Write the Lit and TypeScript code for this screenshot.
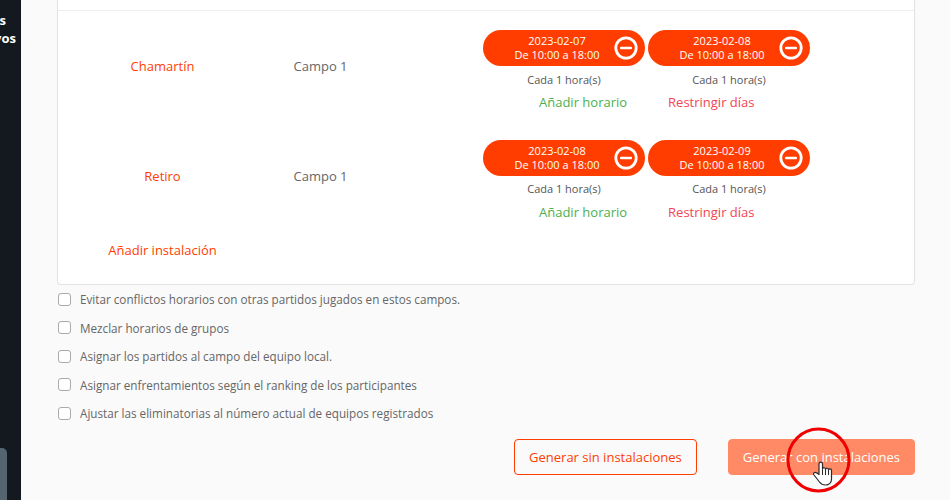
import { LitElement, html, css, svg } from 'lit';
import { customElement } from 'lit/decorators.js';

interface Slot { date: string; }
interface Venue { name: string; field: string; slots: Slot[]; }

const venues: Venue[] = [
    { name: 'Chamartín', field: 'Campo 1', slots: [{ date: '2023-02-07' }, { date: '2023-02-08' }] },
    { name: 'Retiro', field: 'Campo 1', slots: [{ date: '2023-02-08' }, { date: '2023-02-09' }] },
];

const options = [
    'Evitar conflictos horarios con otras partidos jugados en estos campos.',
    'Mezclar horarios de grupos',
    'Asignar los partidos al campo del equipo local.',
    'Asignar enfrentamientos según el ranking de los participantes',
    'Ajustar las eliminatorias al número actual de equipos registrados',
];

const minusIcon = svg`<circle cx="12" cy="12" r="10.2" fill="none" stroke="#fff" stroke-width="2.8"/><rect x="6" y="10.7" width="12" height="2.6" rx="1" fill="#fff"/>`;

@customElement('app-root')
export class AppRoot extends LitElement {
    static styles = css`
        :host {
            display: flex;
            width: 950px;
            height: 500px;
            overflow: hidden;
            position: relative;
            background: #fafafa;
            font-family: "Open Sans", sans-serif;
            color: #555;
        }
        .sidebar {
            width: 21px;
            flex: none;
            background: #13191e;
            overflow: hidden;
            display: flex;
            flex-direction: column;
            align-items: flex-end;
            padding: 11px 0 0 0;
            box-sizing: border-box;
            color: #fff;
            font-size: 13px;
            font-weight: 700;
            line-height: 18px;
            white-space: nowrap;
        }
        .sidebar .line1 { margin-right: 15px; }
        .sidebar .line2 { margin-right: 5px; }
        .sidebar-tab {
            margin-top: auto;
            align-self: flex-start;
            width: 7px;
            height: 52px;
            background: #546570;
            border-radius: 0 5px 0 0;
        }
        .main {
            flex: 1;
            padding: 0 35px 0 36px;
        }
        .panel {
            height: 285px;
            box-sizing: border-box;
            background: #fff;
            border: 1px solid #e2e2e2;
            border-top: none;
            border-radius: 0 0 4px 4px;
        }
        .top-line {
            height: 10px;
            border-bottom: 1px solid #eee;
        }
        .venue {
            display: grid;
            grid-template-columns: 209px 107px 1fr;
            height: 109.7px;
            align-items: center;
            font-size: 13px;
            text-align: center;
        }
        .venue-name { color: #ff3d00; }
        .venue-field { color: #666; }
        .schedule {
            align-self: start;
            padding: 19px 0 0 109px;
        }
        .slots { display: flex; gap: 3px; }
        .slot { width: 162px; }
        .pill {
            height: 36px;
            border-radius: 18px;
            background: #ff3d00;
            color: #fff;
            font-size: 11px;
            line-height: 14px;
            display: flex;
            align-items: center;
            padding-left: 22px;
            box-sizing: border-box;
        }
        .pill-text { width: 104px; text-align: center; }
        .pill svg { width: 24px; height: 24px; margin-left: 5px; flex: none; }
        .every {
            font-size: 11px;
            line-height: 15px;
            margin-top: 5.5px;
            color: #555;
        }
        .links {
            display: flex;
            font-size: 13px;
            line-height: 18px;
            margin-top: 6.4px;
            padding-left: 56px;
            gap: 41px;
        }
        .add { color: #4caf50; }
        .restrict { color: #f44455; }
        .add-venue {
            font-size: 13px;
            line-height: 18px;
            color: #ff3d00;
            width: 209px;
            text-align: center;
            margin-top: 10.6px;
        }
        .option {
            display: flex;
            align-items: center;
            height: 28.5px;
            font-size: 11.7px;
            color: #666;
            gap: 9px;
            padding-left: 1px;
        }
        .check {
            width: 13px;
            height: 13px;
            box-sizing: border-box;
            border: 1px solid #aaa;
            border-radius: 3px;
            background: #fff;
            flex: none;
        }
        .actions {
            display: flex;
            justify-content: flex-end;
            gap: 31px;
            margin-top: 11.5px;
        }
        .btn {
            height: 36px;
            box-sizing: border-box;
            border-radius: 4px;
            font-family: inherit;
            font-size: 13px;
            padding: 0 14px;
            border: 1px solid #ff3d00;
            background: transparent;
            color: #ff3d00;
        }
        .btn.filled {
            background: #ff8a65;
            border-color: #ff8a65;
            color: #fff;
        }
        .click-mark {
            position: absolute;
            left: 786px;
            top: 427px;
            width: 66px;
            height: 68px;
            pointer-events: none;
        }
    `;

    private renderVenue(v: Venue) {
        return html`
            <div class="venue">
                <div class="venue-name">${v.name}</div>
                <div class="venue-field">${v.field}</div>
                <div class="schedule">
                    <div class="slots">
                        ${v.slots.map((s) => html`
                            <div class="slot">
                                <div class="pill">
                                    <div class="pill-text">${s.date}<br />De 10:00 a 18:00</div>
                                    <svg viewBox="0 0 24 24">${minusIcon}</svg>
                                </div>
                                <div class="every">Cada 1 hora(s)</div>
                            </div>
                        `)}
                    </div>
                    <div class="links">
                        <span class="add">Añadir horario</span>
                        <span class="restrict">Restringir días</span>
                    </div>
                </div>
            </div>
        `;
    }

    render() {
        return html`
            <aside class="sidebar">
                <div class="line1">s</div>
                <div class="line2">vos</div>
                <div class="sidebar-tab"></div>
            </aside>
            <main class="main">
                <section class="panel">
                    <div class="top-line"></div>
                    ${venues.map((v) => this.renderVenue(v))}
                    <div class="add-venue">Añadir instalación</div>
                </section>
                <div class="options">
                    ${options.map((o) => html`
                        <label class="option"><span class="check"></span><span>${o}</span></label>
                    `)}
                </div>
                <div class="actions">
                    <button class="btn">Generar sin instalaciones</button>
                    <button class="btn filled">Generar con instalaciones</button>
                </div>
            </main>
            <svg class="click-mark" viewBox="0 0 66 68">
                <ellipse cx="32.500" cy="33" rx="30.500" ry="31" fill="none" stroke="#f00000" stroke-width="3"/>
                <path d="M33 37 L33 47.500 L31 46 C29 44.500 26.500 46 28 48 L33.500 55 C35 57 37 58 39.500 58 C43 58 45.500 55.500 45.500 52 L45.500 43.500 C45.500 41.500 43 41.500 42.500 43 C42.500 41 40 40.500 39.500 42.500 C39.500 40.500 37 40 36.500 42 L36.500 37 C36.500 34.500 33 34.500 33 37 Z" fill="#fff" stroke="#2b2b2b" stroke-width="1.200" stroke-linejoin="round"/>
                <path d="M36.500 42 V48 M39.500 42.500 V48 M42.500 43 V48" stroke="#2b2b2b" stroke-width="1" fill="none"/>
            </svg>
        `;
    }
}
